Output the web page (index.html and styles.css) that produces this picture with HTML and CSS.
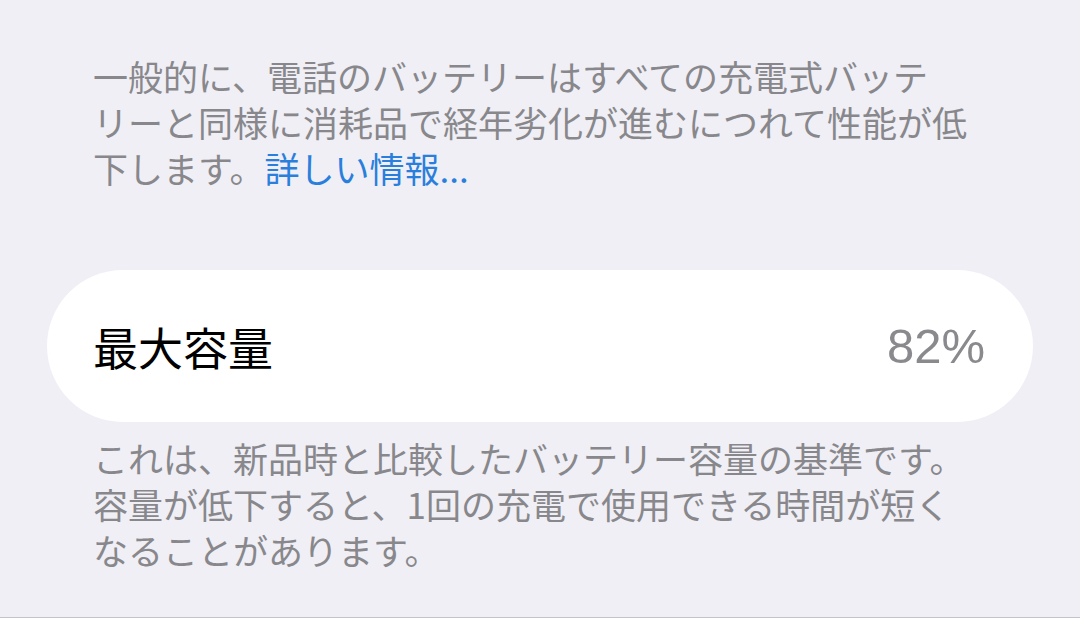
FILE: index.html
```html
<!DOCTYPE html>
<html lang="ja">
<head>
    <meta charset="UTF-8">
    <meta name="viewport" content="width=device-width, initial-scale=1.0">
    <title>バッテリーの状態</title>
    <link rel="stylesheet" href="styles.css">
</head>
<body>
    <div class="page">
        <p class="note note-top">
            一般的に、電話のバッテリーはすべての充電式バッテ<br>リーと同様に消耗品で経年劣化が進むにつれて性能が低<br>下します。<a href="#" class="more">詳しい情報...</a>
        </p>
        <div class="card">
            <span class="label">最大容量</span>
            <span class="value">82%</span>
        </div>
        <p class="note note-bottom">
            これは、新品時と比較したバッテリー容量の基準です。<br>容量が低下すると、1回の充電で使用できる時間が短く<br>なることがあります。
        </p>
        <div class="hairline"></div>
    </div>
</body>
</html>
```

FILE: styles.css
```css
html, body {
    margin: 0;
    padding: 0;
    height: 100%;
}
body {
    background-color: #f0eff5;
    font-family: "Noto Sans CJK JP", "Noto Sans", sans-serif;
}
.page {
    display: flex;
    flex-direction: column;
    height: 100%;
    padding: 0 47px;
    box-sizing: border-box;
}
.note {
    margin: 0;
    padding: 0 46px;
    font-size: 35px;
    line-height: 46px;
    color: #88888c;
    white-space: nowrap;
}
.note-top {
    margin-top: 53px;
}
.more {
    color: #2a7fdc;
    text-decoration: none;
}
.card {
    display: flex;
    align-items: center;
    justify-content: space-between;
    height: 152px;
    margin-top: 79px;
    padding: 0 48px 0 46px;
    background: #fff;
    border-radius: 76px;
}
.label {
    font-size: 45px;
    color: #000;
}
.value {
    font-family: "Liberation Sans", Arial, sans-serif;
    font-size: 49px;
    color: #8a8a8e;
}
.note-bottom {
    margin-top: 13px;
}
.hairline {
    margin: auto -47px 0;
    height: 1px;
    background: #c4c4c8;
}
```
